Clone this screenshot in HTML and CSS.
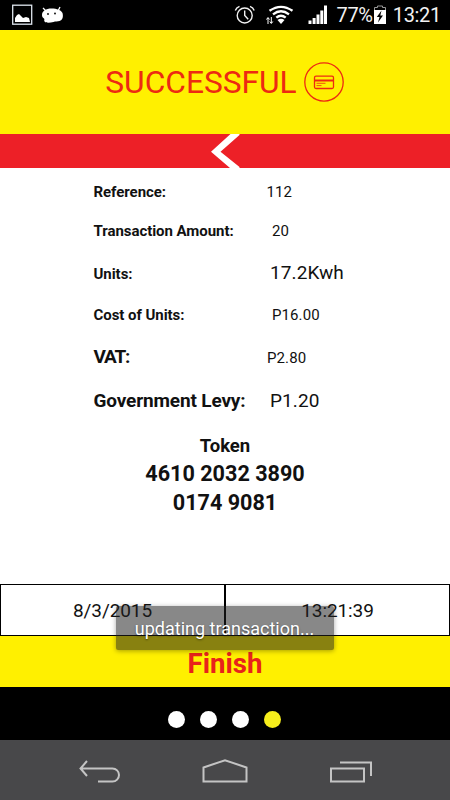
FILE: index.html
```html
<!DOCTYPE html>
<html lang="en">
<head>
    <meta charset="UTF-8">
    <meta name="viewport" content="width=device-width, initial-scale=1.0">
    <title>Transaction Successful</title>
    <link rel="stylesheet" href="styles.css">
</head>
<body>
    <div class="screen">
        <div class="status-bar">
            <svg class="status-left" width="56" height="30" viewBox="0 0 56 30">
                <rect x="0.7" y="5.2" width="19" height="19" fill="none" stroke="#dfe6ee" stroke-width="1.3"/>
                <path d="M3 22v-4l2-3 2-1 2 2 2 2 3-1 3 1 1 4z" fill="#fff"/>
                <path d="M31 8l3 3M48 7l-2 4" stroke="#fff" stroke-width="1.3"/>
                <path d="M30 15c0-4 4-6.500 9.500-6.500S49 10 50.500 13c1 4 0 7-3 8-2 .5-4 .2-6 1-4 1-8 1-9-.5-.8-1.500.5-2-.5-3-1.500-1-2-2-2-3.500z" fill="#fff"/>
                <circle cx="36" cy="14" r="0.9"/>
                <circle cx="43" cy="13.500" r="0.9"/>
            </svg>
            <div class="status-right">
                <svg class="status-icons" width="96" height="30" viewBox="233 0 96 30">
                    <g fill="none" stroke="#f2f2f2" stroke-width="1.4">
                        <circle cx="244.700" cy="15.500" r="7.500"/>
                        <path d="M244.700 10.500v5l3.500 3.800M235.300 10.500q1-3 4.200-4.200M250 6.300q3.200 1.200 4.200 4.200"/>
                    </g>
                    <path d="M269.500 10.800q11.500-8 23 0M273 14.300q8-6 16 0M276.300 17.700q4.700-4 9.400 0" fill="none" stroke="#fff" stroke-width="2.300"/>
                    <path d="M277.500 20q3.500-2.500 7 0l-3.500 4z" fill="#fff"/>
                    <path d="M268 24v-6M266.500 19.500l1.500-2 1.500 2M271.300 17v6M269.800 21.500l1.500 2 1.500-2" fill="none" stroke="#fff" stroke-width="1"/>
                    <path d="M308.500 20.500h3v3.500h-3zM312.600 18h3v6h-3zM316.500 14.500h3v9.500h-3zM320.300 10.500h3v13.500h-3zM324 5.500h3v18.500h-3z" fill="#fff"/>
                </svg>
                <span class="battery-level">77%</span>
                <svg width="14" height="30" viewBox="0 0 14 30">
                    <path d="M1.500 10V7.500h3V6h5v1.500h3V10" fill="none" stroke="#999" stroke-width="1"/>
                    <path d="M1 10h12v14H1z" fill="#fff"/>
                    <path d="M8.500 10.500L3.800 17h2.700l-1.500 5.500 5-7H7.300z"/>
                </svg>
                <span class="clock">13:21</span>
            </div>
        </div>

        <div class="header">
            <h1>SUCCESSFUL</h1>
            <svg width="40" height="40" viewBox="0 0 40 40" fill="none" stroke="#ed2a12">
                <circle cx="20" cy="20" r="19.200" stroke-width="1.300"/>
                <rect x="10.500" y="14.200" width="19" height="12.300" rx="1.500" stroke-width="1.300"/>
                <path d="M10.500 18.500h19" stroke-width="2"/>
                <path d="M12.500 21.300h9M12.500 23.600h5" stroke-width="0.800"/>
            </svg>
        </div>

        <div class="back-bar">
            <svg width="30" height="34" viewBox="0 0 30 34">
                <path d="M20.500 0h9v1L10.500 17.700 29.500 33v1h-9.500L1 17.700z" fill="#fff"/>
            </svg>
        </div>

        <div class="details">
            <div class="row reference"><span class="label">Reference:</span><span class="value">112</span></div>
            <div class="row amount"><span class="label">Transaction Amount:</span><span class="value">20</span></div>
            <div class="row units"><span class="label">Units:</span><span class="value large">17.2Kwh</span></div>
            <div class="row cost"><span class="label">Cost of Units:</span><span class="value">P16.00</span></div>
            <div class="row vat"><span class="label large">VAT:</span><span class="value">P2.80</span></div>
            <div class="row levy"><span class="label large">Government Levy:</span><span class="value large">P1.20</span></div>
            <div class="token">
                <h2>Token</h2>
                <p>4610 2032 3890<br>0174 9081</p>
            </div>
        </div>

        <div class="timestamp">
            <div class="cell">8/3/2015</div>
            <div class="cell">13:21:39</div>
        </div>
        <button class="finish">Finish</button>

        <div class="dots">
            <span class="dot"></span>
            <span class="dot"></span>
            <span class="dot"></span>
            <span class="dot active"></span>
        </div>

        <div class="nav-bar">
            <svg width="42" height="26" viewBox="0 0 42 26">
                <path d="M8 2L1.500 9.500 8 17M2 9.500h31.500a6.500 6.500 0 0 1 0 13H19"/>
            </svg>
            <svg width="46" height="26" viewBox="0 0 46 26">
                <path d="M1.500 8.500L23 1.200 44.500 8.500v14h-43z"/>
            </svg>
            <svg width="44" height="26" viewBox="0 0 44 26">
                <path d="M2 9.500h33v13H2zM11 3.500h31V17"/>
            </svg>
        </div>

        <div class="toast">updating transaction...</div>
    </div>
</body>
</html>
```
FILE: styles.css
```css
body {
    margin: 0;
    font-family: Roboto, sans-serif;
    background: #000;
}

.screen {
    position: relative;
    display: flex;
    flex-direction: column;
    width: 450px;
    height: 800px;
    overflow: hidden;
    background: #fff;
    color: #111;
}

svg {
    display: block;
    flex-shrink: 0;
}

.status-bar {
    display: flex;
    justify-content: space-between;
    height: 30px;
    padding: 0 9px 0 12px;
    background: #000;
    color: #f2f2f2;
    font-size: 20px;
    line-height: 31px;
}

.status-right {
    display: flex;
}

.status-icons {
    margin-right: 7px;
}

.battery-level {
    letter-spacing: -0.3px;
}

.clock {
    margin-left: 6px;
    letter-spacing: -0.3px;
}

.header {
    display: flex;
    justify-content: center;
    align-items: center;
    gap: 7px;
    height: 104px;
    box-sizing: border-box;
    padding: 0 1px 1px 0;
    background: #fff000;
    color: #ed2a12;
}

h1 {
    margin: 0;
    padding-top: 2px;
    font-size: 31.7px;
    font-weight: 400;
}

.back-bar {
    display: flex;
    justify-content: center;
    height: 34px;
    background: #ed2027;
}

.details {
    height: 411px;
    padding: 5px 0 0 93.5px;
}

.row {
    display: flex;
    align-items: baseline;
    font-size: 15px;
    line-height: 39px;
    height: 38px;
}

.label {
    width: 173px;
    flex-shrink: 0;
    font-weight: 700;
    letter-spacing: -0.05px;
    white-space: nowrap;
}

.value {
    letter-spacing: 0.1px;
}

.large {
    font-size: 19px;
}

.label.large {
    letter-spacing: -0.15px;
}

.vat .label.large {
    letter-spacing: -1.2px;
}

.amount {
    height: 41px;
    line-height: 41px;
}

.units {
    height: 42px;
    line-height: 42px;
}

.cost {
    height: 41px;
    line-height: 43px;
}

.vat,
.levy {
    height: 44px;
    line-height: 44px;
}

.amount .label,
.cost .label {
    width: 178.5px;
}

.vat .label {
    width: 173.5px;
}

.units .label,
.levy .label {
    width: 176.5px;
}

.token {
    margin-left: -93.5px;
    padding-top: 10.5px;
    text-align: center;
    font-weight: 700;
}

h2 {
    margin: 0;
    font-size: 18.5px;
    line-height: 25px;
}

.token p {
    margin: 0;
    font-size: 21.6px;
    line-height: 29.5px;
}

.timestamp {
    display: flex;
    height: 52px;
    font-size: 19px;
}

.cell {
    flex: 1;
    box-sizing: border-box;
    border: 1px solid #000;
    line-height: 51px;
    text-align: center;
    letter-spacing: -0.1px;
}

.finish {
    height: 51px;
    padding: 3px 0 0;
    border: none;
    background: #fff000;
    color: #e8231b;
    font-family: inherit;
    font-size: 27.6px;
    font-weight: 700;
}

.dots {
    display: flex;
    justify-content: center;
    align-items: center;
    gap: 15px;
    height: 53px;
    box-sizing: border-box;
    padding: 11px 1px 0 0;
    background: #000;
}

.dot {
    width: 17px;
    height: 17px;
    border-radius: 50%;
    background: #fff;
}

.dot.active {
    background: #f7ee1c;
}

.nav-bar {
    display: flex;
    justify-content: space-between;
    height: 60px;
    box-sizing: border-box;
    padding: 19px 77px 0 79px;
    background: #48484a;
}

.nav-bar svg {
    fill: none;
    stroke: #c4c4c4;
    stroke-width: 2;
}

.toast {
    position: absolute;
    left: 115.5px;
    top: 606px;
    width: 218px;
    height: 44px;
    border-radius: 2px;
    background: rgba(30, 30, 30, 0.53);
    box-shadow: 0 1px 5px rgba(0, 0, 0, 0.35);
    color: #fff;
    font-size: 18px;
    line-height: 46px;
    text-align: center;
    text-shadow: 0 1px 2px rgba(0, 0, 0, 0.5);
}
```
